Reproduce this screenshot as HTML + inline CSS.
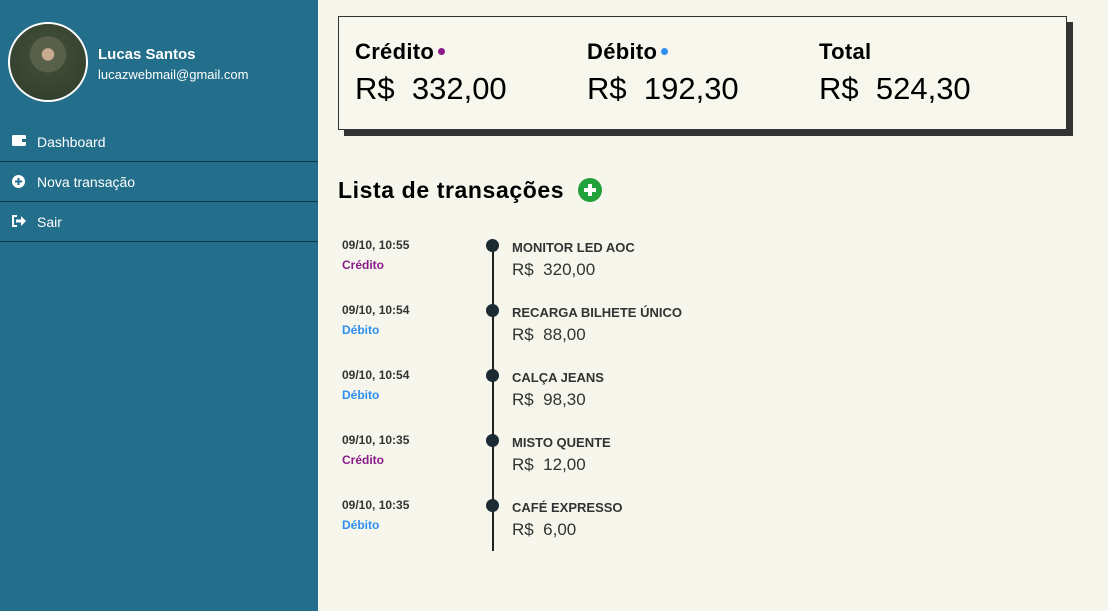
<!DOCTYPE html>
<html><head><meta charset="utf-8"><style>
body{margin:0;width:1108px;height:611px;background:#f6f6ec;font-family:"Liberation Sans",sans-serif;position:relative;overflow:hidden}
.side{position:absolute;left:0;top:0;width:318px;height:611px;background:#236e8a;color:#fff}
.av{position:absolute;left:8px;top:22px;width:76px;height:76px;border-radius:50%;border:2px solid #fff;background:radial-gradient(circle at 50% 40%,#c9a98e 0 10%,#59604a 11% 30%,#3d4a35 31%,#2f3b2a)}
.name{position:absolute;left:98px;top:46px;font-weight:bold;font-size:15px}
.mail{position:absolute;left:98px;top:67px;font-size:13px}
.nav{position:absolute;left:0;width:318px;height:39px;border-bottom:1.5px solid #0f3a4b;font-size:14px}
.nav span{position:absolute;left:37px;top:12px}
.nav svg{position:absolute;left:12px;top:13px}
.card{position:absolute;left:338px;top:16px;width:727px;height:112px;border:1px solid #333;background:#f7f7ed;box-shadow:6px 6px 0 #333}
.col{position:absolute;top:22px}
.lab{font-weight:bold;font-size:22px;letter-spacing:0.3px}
.val{font-size:31px;margin-top:6px}
.dot{display:inline-block;width:7px;height:7px;border-radius:50%;vertical-align:4px;margin-left:4px}
h2{position:absolute;left:338px;top:177px;margin:0;font-size:23px;letter-spacing:0.6px}
.plus{position:absolute;left:578px;top:178px;width:24px;height:24px;border-radius:50%;background:#22a03a}
.tline{position:absolute;left:492px;top:245px;width:2px;height:306px;background:#222}
.it{position:absolute;left:0;width:1108px}
.dt{position:absolute;left:342px;top:-7px;font-size:12px;font-weight:bold;color:#333}
.ty{position:absolute;left:342px;top:13px;font-size:12px;font-weight:bold}
.bd{position:absolute;left:486px;top:-6px;width:13px;height:13px;border-radius:50%;background:#1b2a33}
.ti{position:absolute;left:512px;top:-5px;font-size:13px;font-weight:bold;color:#333}
.am{position:absolute;left:512px;top:15px;font-size:17px;color:#333}
</style></head><body>
<div class="side">
<div class="av"></div>
<div class="name">Lucas Santos</div>
<div class="mail">lucazwebmail@gmail.com</div>
<div class="nav" style="top:122px"><svg width="14" height="12"><rect x="0" y="0" width="14" height="11" rx="1.5" fill="#fff"/><rect x="10" y="4" width="4" height="3" fill="#236e8a"/></svg><span>Dashboard</span></div>
<div class="nav" style="top:162px"><svg width="13" height="13"><circle cx="6.5" cy="6.5" r="6.5" fill="#fff"/><path d="M6.5 3v7M3 6.5h7" stroke="#236e8a" stroke-width="2"/></svg><span>Nova transação</span></div>
<div class="nav" style="top:202px"><svg width="14" height="12"><path d="M5 1H1v10h4" stroke="#fff" stroke-width="2" fill="none"/><path d="M4 4.5h5V1l5 5-5 5V7.5H4z" fill="#fff"/></svg><span>Sair</span></div>
</div>
<div class="card">
<div class="col" style="left:16px"><div class="lab">Crédito<span class="dot" style="background:#8a1a8a"></span></div><div class="val">R$&nbsp; 332,00</div></div>
<div class="col" style="left:248px"><div class="lab">Débito<span class="dot" style="background:#2e8ff0"></span></div><div class="val">R$&nbsp; 192,30</div></div>
<div class="col" style="left:480px"><div class="lab">Total</div><div class="val">R$&nbsp; 524,30</div></div>
</div>
<h2>Lista de transações</h2>
<div class="plus"><svg width="24" height="24"><path d="M12 6v12M6 12h12" stroke="#fff" stroke-width="4"/></svg></div>
<div class="tline"></div>
<div class="it" style="top:245px"><div class="dt">09/10, 10:55</div><div class="ty" style="color:#8a1a8a">Crédito</div><div class="bd"></div><div class="ti">MONITOR LED AOC</div><div class="am">R$&nbsp; 320,00</div></div>
<div class="it" style="top:310px"><div class="dt">09/10, 10:54</div><div class="ty" style="color:#2e8ff0">Débito</div><div class="bd"></div><div class="ti">RECARGA BILHETE ÚNICO</div><div class="am">R$&nbsp; 88,00</div></div>
<div class="it" style="top:375px"><div class="dt">09/10, 10:54</div><div class="ty" style="color:#2e8ff0">Débito</div><div class="bd"></div><div class="ti">CALÇA JEANS</div><div class="am">R$&nbsp; 98,30</div></div>
<div class="it" style="top:440px"><div class="dt">09/10, 10:35</div><div class="ty" style="color:#8a1a8a">Crédito</div><div class="bd"></div><div class="ti">MISTO QUENTE</div><div class="am">R$&nbsp; 12,00</div></div>
<div class="it" style="top:505px"><div class="dt">09/10, 10:35</div><div class="ty" style="color:#2e8ff0">Débito</div><div class="bd"></div><div class="ti">CAFÉ EXPRESSO</div><div class="am">R$&nbsp; 6,00</div></div>
</body></html>
